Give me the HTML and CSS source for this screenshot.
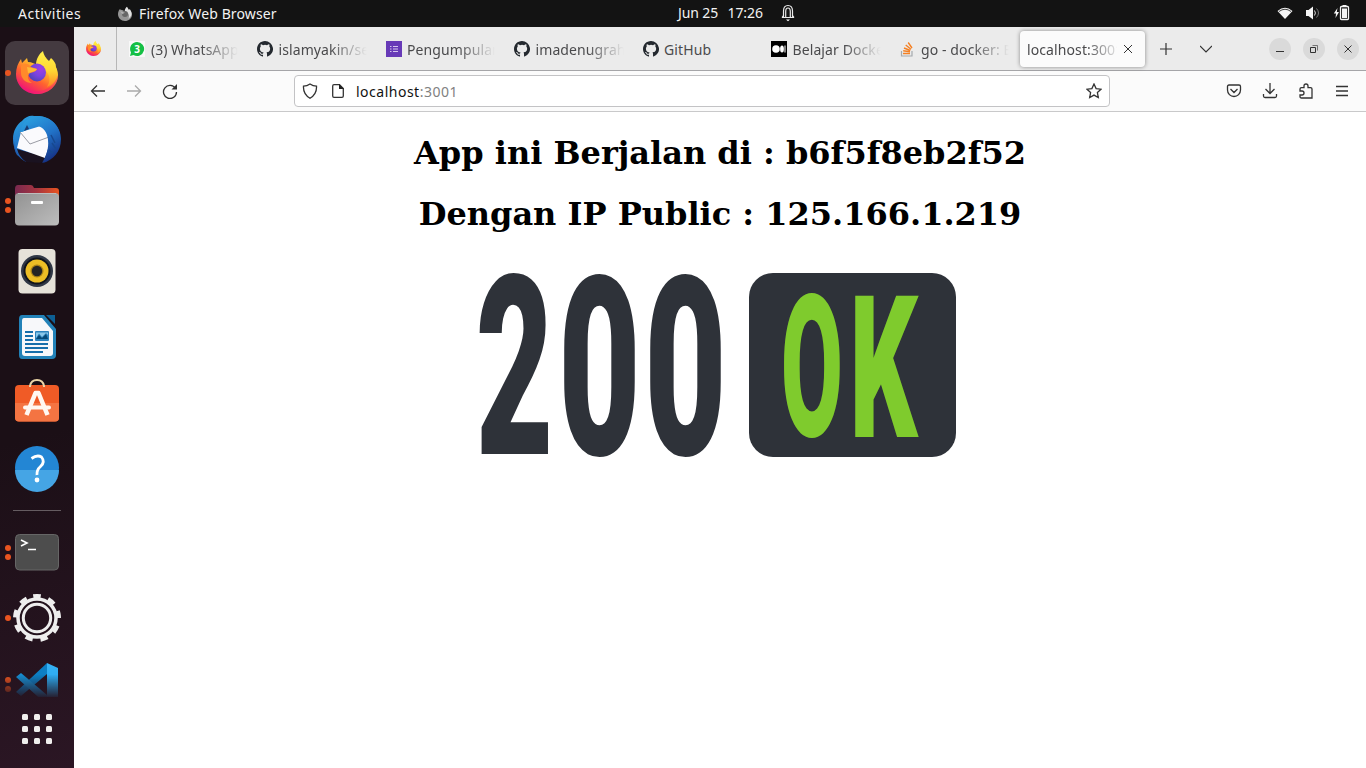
FILE: index.html
```html
<!DOCTYPE html>
<html lang="en">
<head>
<meta charset="utf-8">
<title>localhost:3001</title>
<link rel="stylesheet" href="styles.css">
</head>
<body>
<svg class="defs" width="0" height="0" aria-hidden="true">
  <defs>
    <linearGradient id="ffBody" x1=".85" y1=".1" x2=".25" y2=".95"><stop offset="0" stop-color="#fff044"/><stop offset=".3" stop-color="#ffb52a"/><stop offset=".6" stop-color="#ff622f"/><stop offset="1" stop-color="#f0107a"/></linearGradient>
    <linearGradient id="ffFlame" x1=".5" y1="0" x2=".5" y2="1"><stop offset="0" stop-color="#fff14a"/><stop offset=".55" stop-color="#ffd633"/><stop offset="1" stop-color="#ff8a23"/></linearGradient>
    <radialGradient id="ffGlobe" cx=".7" cy=".3" r=".8"><stop offset="0" stop-color="#a13de4"/><stop offset=".5" stop-color="#7a43df"/><stop offset="1" stop-color="#4b42b5"/></radialGradient>
    <linearGradient id="tb" x1=".2" y1="0" x2=".7" y2="1"><stop offset="0" stop-color="#2ba0e0"/><stop offset=".5" stop-color="#2173c8"/><stop offset="1" stop-color="#152f82"/></linearGradient>
    <linearGradient id="folder"><stop offset="0" stop-color="#79294f"/><stop offset=".5" stop-color="#a63540"/><stop offset="1" stop-color="#e95420"/></linearGradient>
    <linearGradient id="grey" x2="1" y2="1"><stop offset="0" stop-color="#929292"/><stop offset="1" stop-color="#bdbdbd"/></linearGradient>
    <linearGradient id="vs" x2="0" y2="1"><stop offset="0" stop-color="#36b2f5"/><stop offset="1" stop-color="#1e9fe8"/></linearGradient>
    <symbol id="firefox" viewBox="0 0 48 48">
      <path fill="url(#ffBody)" d="M24 45C12 45 3 36 3 25C3 19 5 14 8 10L9 14L14 9L15 13C19 13 22 15 24 16L34 12C42 15 45 20 45 26C45 37 35 45 24 45Z"/>
      <path fill="#f3197b" opacity=".45" d="M3 26C5 37 14 42 24 42C34 42 42 36 45 26C45 37 35 45 24 45C13 45 4 37 3 26Z"/>
      <path fill="url(#ffFlame)" d="M23 16C23 10 26 5 30 2C31 7 33 9 36 12L38 9C41 12 43 14 43 18C46 25 43 34 34 38C40 29 35 20 23 16Z"/>
      <circle cx="24" cy="23.500" r="9" fill="url(#ffGlobe)"/>
      <path fill="#ff8a2b" d="M8 17C12 13 16 15 18 18L24 20C23 23 20 23 17 24C14 26 14 31 19 34C12 34 8 29 8 24Z"/>
      <path fill="#ffb936" d="M14 18L24 20C22 23 18 23 15 24Z"/>
    </symbol>
    <symbol id="firefox-mono" viewBox="0 0 48 48">
      <path fill="#959595" d="M24 45C12 45 3 36 3 25C3 19 5 14 8 10L14 12C19 13 22 15 24 16L34 12C42 15 45 20 45 26C45 37 35 45 24 45Z"/>
      <path fill="#e1e1e1" d="M23 16C23 10 26 5 30 2L36 12L38 9C48 21 44 32 34 38C40 29 35 20 23 16Z"/><circle cx="24" cy="24" r="9" fill="#666"/><path fill="#b4b4b4" d="M9 16L24 20L16 24Z"/>
    </symbol>
    <symbol id="github" viewBox="0 0 16 16"><path fill="#24292f" d="M8 0C3.580 0 0 3.580 0 8c0 3.540 2.290 6.530 5.470 7.590.4.070.55-.17.55-.38v-1.490c-2.010.37-2.530-.49-2.690-.94-.09-.23-.48-.94-.82-1.130-.28-.15-.68-.52-.01-.53.63-.01 1.080.58 1.230.82.72 1.210 1.870.87 2.330.66.070-.52.28-.87.51-1.070-1.780-.2-3.640-.89-3.640-3.950 0-.87.31-1.590.82-2.150-.08-.2-.36-1.020.08-2.120 0 0 .67-.21 2.200.82a7.600 7.600 0 0 1 4 0c1.530-1.040 2.200-.82 2.200-.82.44 1.100.16 1.920.08 2.120.51.56.82 1.270.82 2.150 0 3.070-1.870 3.750-3.650 3.950.29.25.54.73.54 1.480v2.190c0 .21.150.46.55.38A8 8 0 0 0 8 0Z"/></symbol>
  </defs>
</svg>

<header class="topbar">
  <div class="topbar-left"><span class="activities">Activities</span><svg width="16" height="16"><use href="#firefox-mono"/></svg><span class="appname">Firefox Web Browser</span></div>
  <div class="clock"><span class="date">Jun 25</span><span class="time">17:26</span>
    <svg width="16" height="18" viewBox="0 0 16 18" fill="none" stroke="#e8e8e8" stroke-width="1.200"><path d="M2 13.500H14M3.500 13V7Q3.500 1.500 8 1.500T12.500 7V13M5.700 13V7.500Q5.700 4 8 4T10.300 7.500V13"/><path d="M2 13.500L3.500 11.500M14 13.500L12.500 11.500"/><path d="M6 15.500H10L8 17.200Z" fill="#fff" stroke="none"/></svg>
  </div>
  <div class="tray">
    <svg width="16" height="14" viewBox="0 0 16 14"><path d="M.5 5Q8-1.500 15.500 5L8 13Z" fill="#f4f4f4"/><path d="M2 5.500Q8 1 14 5.500" stroke="#131313" fill="none" stroke-width=".8"/></svg>
    <svg width="16" height="16" viewBox="0 0 16 16"><path d="M1 5H3.500L8 1.500V14.500L3.500 11H1Z" fill="#f4f4f4"/><path d="M9.500 5.500Q11.300 8 9.500 10.500" fill="none" stroke="#ddd"/><path d="M11.500 3.500Q15.500 8 11.500 12.500" fill="none" stroke="#777"/></svg>
    <svg width="17" height="16" viewBox="0 0 17 16"><path d="M4.500 3L.8 8.500H3L2.500 13L6 7H3.800Z" fill="#f4f4f4"/><rect x="7.500" y="1.500" width="8" height="13" rx="1" fill="none" stroke="#f4f4f4" stroke-width="1.300"/><path d="M9 3.500H14V13H9ZM9.500 0H13.500V2H9.500Z" fill="#f4f4f4"/></svg>
  </div>
</header>

<div class="desktop">
  <nav class="dock">
    <div class="dock-item active"><div class="dots"><i></i></div><svg class="app"><use href="#firefox"/></svg></div>
    <div class="dock-item"><svg class="app" viewBox="0 0 48 48">
      <path fill="url(#tb)" d="M0 24C0 16 4 9 9 6C12 2 17 0 21 1C37 0 48 11 48 24C48 37 40 45 30 48L33 41L16 38L13 47C5 43 0 34 0 24Z"/>
      <path fill="#1a1220" d="M4 34L32 42Q33 46 27 48L13 47Q6 42 4 34Z"/>
      <path fill="#fafafd" d="M4 33L8 17L31 10L38 25L32 43Z"/>
      <path d="M7 17L17 29L36 22" stroke="#9a9ca5" fill="none"/>
      <path fill="url(#tb)" d="M8 17C8 7 17 1 26 1C37 2 43 8 46 16C49 27 45 37 37 43L29 48C34 40 37 30 34 20C31 11 22 9 16 11C14 13 12 17 8 17Z"/>
      <path d="M1 22Q0 38 13 47L4 40Q0 34 1 22" fill="#225dae"/><path d="M11 16L14 10L16 14Z" fill="#193b72"/>
      <path d="M38 20L42 28M39 28L43 34M36 35L40 38" stroke="#174990" stroke-width="1.500"/>
    </svg></div>
    <div class="dock-item"><div class="dots"><i></i><i></i></div><svg class="app" viewBox="0 0 48 48"><path fill="url(#folder)" d="M2 8Q2 4 5 4H18Q20 4 21 7H43Q46 7 46 10V26H2Z"/><rect x="2" y="12" width="44" height="32.500" rx="4" fill="url(#grey)"/><path d="M5 12.500H43" stroke="#bdbdbd"/><rect x="18" y="20" width="12" height="3" rx="1" fill="#fff"/></svg></div>
    <div class="dock-item"><svg class="app" viewBox="0 0 48 48"><rect x="5.500" y="2" width="37" height="44.500" rx="4" fill="#e6e2d9"/><circle cx="24" cy="24" r="16" fill="#303745"/><circle cx="24" cy="24" r="13.500" fill="#11141b"/><circle cx="24" cy="24" r="11.500" fill="#edbe25"/><circle cx="24" cy="24" r="6.500" fill="#a98218"/><circle cx="24" cy="24" r="5.200" fill="#242424"/></svg></div>
    <div class="dock-item"><svg class="app" viewBox="0 0 48 48"><path d="M9 2H31L43 16V42Q43 46 39 46H9Q6 46 6 42V6Q6 2 9 2Z" fill="#2282b8"/><path d="M33 2H42V11Z" fill="#0d5f94"/><path d="M11 5H29L40 18V40Q40 43 37 43H12Q9 43 9 40V8Q9 5 11 5Z" fill="#f7f8fa"/><path d="M12 19H20M12 23H20M12 27H20M12 31H35M12 35H35M12 39H30" stroke="#176fab" stroke-width="2"/><rect x="22" y="18" width="14" height="10" rx="1" fill="#2c83bd"/><path d="M23 26L26 22L29 25L33 21L35 26Z" fill="#064976"/><path d="M23 19.500H35V22L33 20L29 24L26 20.500L23 25Z" fill="#8ac7e9"/></svg></div>
    <div class="dock-item"><svg class="app" viewBox="0 0 48 48"><rect x="2" y="6" width="44" height="36.500" rx="4" fill="#f05b26"/><path d="M2 24H46V38.500Q46 42.500 42 42.500H6Q2 42.500 2 38.500Z" fill="#f47442"/><path d="M17 8V7Q18 1 24 1T31 7V8" fill="none" stroke="#ecd5a7" stroke-width="2"/><g stroke="#fff8f2" fill="none" stroke-width="4.500"><path d="M13.500 36L22.500 14H25.500L34.500 36" stroke-linejoin="round"/><path d="M12 28.500H36" stroke-width="4" stroke-linecap="round"/></g></svg></div>
    <div class="dock-item"><svg class="app" viewBox="0 0 48 48"><circle cx="24" cy="23" r="22" fill="#2386d4"/><path d="M2 25H46A22 22 0 0 1 2 25" fill="#45a5e5"/><path d="M18.500 13.500Q24 9.500 28.500 12Q32.500 17 27.500 21.500Q23.500 25 24 30" fill="none" stroke="#fff" stroke-width="2.800"/><circle cx="24" cy="35" r="2.400" fill="#fff"/></svg></div>
    <div class="dock-sep"></div>
    <div class="dock-item"><div class="dots"><i></i><i></i></div><svg class="app" viewBox="0 0 48 48"><rect x="2.500" y="6.500" width="43" height="35.500" rx="4" fill="#4d4d4d" stroke="#666"/><path d="M8 12L14 15L8 18M15 21.500H23" fill="none" stroke="#fff" stroke-width="1.600"/></svg></div>
    <div class="dock-item"><div class="dots"><i></i></div><svg class="app" viewBox="0 0 48 48" fill="none" stroke="#eee"><circle cx="24" cy="24" r="22" stroke-width="4" stroke-dasharray="7.500 7.858" transform="rotate(-99.800 24 24)"/><circle cx="24" cy="24" r="19" stroke-width="3.500"/><circle cx="24" cy="24" r="13.700" stroke-width="3"/></svg></div>
    <div class="dock-item clipped"><div class="dots"><i></i><i></i></div><svg class="app" viewBox="0 0 48 48"><path d="M34 3L3 32L8 36L34 14Z" fill="#0d7fc4"/><path d="M3 17L8 13L34 35V45Z" fill="#168dd1"/><path d="M34 3L45 8V40L34 45Z" fill="url(#vs)"/></svg></div>
    <div class="apps"><i></i><i></i><i></i><i></i><i></i><i></i><i></i><i></i><i></i></div>
  </nav>

  <main class="browser">
    <div class="tabbar">
      <div class="pinned"><svg width="17" height="17"><use href="#firefox"/></svg></div>
      <div class="tabs">
        <div class="tab"><svg width="16" height="16" viewBox="0 0 16 16"><path d="M0 16V0H16V16Z" fill="#f8f8f8"/><path d="M8 1A7 7 0 1 1 4.500 14L1 15L2 11.500A7 7 0 0 1 8 1Z" fill="#14bf45"/><text x="8" y="11.800" class="badge-num">3</text></svg><span class="w1">(3) WhatsApp</span></div>
        <div class="tab"><svg width="16" height="16"><use href="#github"/></svg><span class="w2">islamyakin/serv</span></div>
        <div class="tab"><svg width="16" height="16" viewBox="0 0 16 16"><path d="M0 0H16V16H0Z" fill="#673ab7"/><path d="M4 5.500H5.500M7 5.500H12M4 8H5.500M7 8H12M4 10.500H5.500M7 10.500H12" stroke="#d5c5ee" stroke-width="1.100"/></svg><span class="w3">Pengumpulan</span></div>
        <div class="tab"><svg width="16" height="16"><use href="#github"/></svg><span class="w4">imadenugraha</span></div>
        <div class="tab"><svg width="16" height="16"><use href="#github"/></svg><span class="w5">GitHub</span></div>
        <div class="tab"><svg width="16" height="16" viewBox="0 0 16 16"><path d="M0 0H16V16H0Z"/><circle cx="5" cy="8" r="3.800" fill="#fff"/><ellipse cx="11" cy="8" rx="1.900" ry="3.500" fill="#fff"/><path d="M14 4.500V11.500" stroke="#fff"/></svg><span class="w6">Belajar Docker</span></div>
        <div class="tab"><svg width="16" height="16" viewBox="0 0 16 16" fill="none"><path d="M1.500 10V15H12V10" stroke="#a5aaae" stroke-width="1.200"/><path d="M3 12.500H10M3.200 9.800L10 10.700M4 7L10.300 9.500M5.700 4L11 8.200M8.200 1.500L12 7" stroke="#f48024" stroke-width="1.400"/></svg><span class="w7">go - docker: Err</span></div>
        <div class="tab selected"><span class="w8">localhost:3001</span><svg width="10" height="10" viewBox="0 0 10 10" stroke="#333"><path d="M1 1L9 9M9 1L1 9"/></svg></div>
      </div>
      <div class="tab-actions"><svg width="12" height="12" viewBox="0 0 12 12" fill="none" stroke="#333" stroke-width="1.200"><path d="M0 6H12M6 0V12"/></svg><svg width="12" height="8" viewBox="0 0 12 8" fill="none" stroke="#333" stroke-width="1.200"><path d="M0 1L6 7L12 1"/></svg></div>
      <div class="window-actions">
        <button><svg viewBox="0 0 12 12"><path d="M2 8.500H10"/></svg></button><button><svg viewBox="0 0 12 12"><path d="M2.500 4.500H7.500V9.500H2.500Z"/><path d="M4.500 2.500H9.500V7.500" opacity=".6"/></svg></button><button><svg viewBox="0 0 12 12"><path d="M2.500 2.500L9.500 9.500M9.500 2.500L2.500 9.500"/></svg></button>
      </div>
    </div>
    <div class="toolbar">
      <div class="nav">
        <svg width="16" height="16" viewBox="0 0 16 16"><path d="M15 8H1.500M7 2.500L1.500 8L7 13.500"/></svg>
        <svg class="disabled" width="16" height="16" viewBox="0 0 16 16"><path d="M1 8H14.500M9 2.500L14.500 8L9 13.500"/></svg>
        <svg width="16" height="16" viewBox="0 0 16 16"><path d="M13.500 5.500A6.500 6.500 0 1 0 14.500 9"/><path d="M15 1V6.500H9.500Z" fill="#333" stroke="none"/></svg>
      </div>
      <div class="urlbar">
        <svg width="16" height="16" viewBox="0 0 16 16"><path d="M8 1Q11 3 14.500 3.200Q15 11 8 15.300Q1 11 1.500 3.200Q5 3 8 1Z"/></svg>
        <svg width="16" height="16" viewBox="0 0 16 16"><path d="M9.500 1.700H4Q2.700 1.700 2.700 3V13Q2.700 14.300 4 14.300H12Q13.300 14.300 13.300 13V5.500Z"/><path d="M9 1V6H14Z" fill="#222" stroke="none"/></svg>
        <div class="url">localhost<span>:3001</span></div>
        <svg width="16" height="16" viewBox="0 0 16 16"><path d="M8 1L10.100 5.600L15 6.200L11.400 9.600L12.300 14.600L8 12.100L3.700 14.600L4.600 9.600L1 6.200L5.900 5.600Z"/></svg>
      </div>
      <div class="tools">
        <svg width="16" height="16" viewBox="0 0 16 16"><path d="M3 2H13Q14.500 2 14.500 3.500V7A6.500 6.500 0 0 1 1.500 7V3.500Q1.500 2 3 2ZM4.500 6L8 9.500L11.500 6"/></svg>
        <svg width="16" height="16" viewBox="0 0 16 16"><path d="M8 0V10.500M3.500 6L8 10.500L12.500 6M1.500 11V13Q1.500 14.500 3 14.500H13Q14.500 14.500 14.500 13V11"/></svg>
        <svg width="16" height="16" viewBox="0 0 16 16"><path d="M2 8V6Q2 4.700 3.500 4.700H6V3Q6 1 8 1T10 3V4.700H12.500Q14 4.700 14 6V15H3.500Q2 15 2 13.500V12H4Q6 12 6 10T4 8Z"/></svg>
        <svg width="16" height="16" viewBox="0 0 16 16"><path d="M2 3.500H14M2 8H14M2 12.500H14"/></svg>
      </div>
    </div>
    <section class="page">
      <h1>App ini Berjalan di : b6f5f8eb2f52</h1>
      <h1>Dengan IP Public : 125.166.1.219</h1>
      <svg class="status" width="500" height="210" viewBox="0 0 500 210" role="img" aria-label="200 OK">
        <rect x="279" y="13" width="207" height="184" rx="24"/>
        <g class="code"><text transform="translate(5.800 194) scale(.533 1)">2</text><text transform="translate(88.300 194.500) scale(.567 1)">0</text><text transform="translate(174.300 194.500) scale(.567 1)">0</text></g>
        <g class="word"><text transform="translate(311 176) scale(.45 1)">O</text><text transform="translate(379.500 176.500) scale(.535 1)">K</text></g>
      </svg>
    </section>
  </main>
</div>
</body>
</html>
```
FILE: styles.css
```css
* { box-sizing: border-box; }
body { margin: 0; width: 1366px; height: 768px; overflow: hidden; background: #fff; font: 14px "Noto Sans", "Open Sans", sans-serif; }
svg { display: block; flex: none; }
.defs { position: absolute; }
.topbar { height: 27px; background: #131313; color: #f2f2f2; display: grid; grid-template-columns: 678px 1fr auto; align-items: center; line-height: 27px; }
.topbar-left, .clock, .tray { display: flex; align-items: center; }
.activities { margin-left: 18px; width: 99px; letter-spacing: .48px; }
.appname { margin-left: 6px; letter-spacing: .12px; }
.clock { line-height: 25px; padding-bottom: 2px; }
.date { width: 49.5px; letter-spacing: -.1px; }
.time { width: 52.5px; letter-spacing: -.1px; }
.tray { gap: 12px; padding: 0 16px 2px 0; }
.desktop { display: flex; height: 741px; }
.dock { width: 74px; padding: 14px 5px 0; background: linear-gradient(165deg, #1b0f16 55%, #2b1624); display: flex; flex-direction: column; gap: 2px; flex: none; }
.dock-item { position: relative; height: 64px; flex: none; padding: 8px; border-radius: 10px; }
.dock-item.active { background: #443a40; }
.app { width: 48px; height: 48px; }
.dots { position: absolute; left: 0; top: 0; height: 64px; display: flex; flex-direction: column; justify-content: center; gap: 3px; }
.dots i { width: 6px; height: 6px; border-radius: 50%; background: #e95420; }
.dock-sep { height: 15px; margin: 0 8px; flex: none; background: linear-gradient(#655c61, #655c61) 0 7px / 100% 1px no-repeat; }
.dock-item.clipped { height: 45px; overflow: hidden; border-radius: 0; -webkit-mask-image: linear-gradient(#000 50%, transparent 105%); mask-image: linear-gradient(#000 50%, transparent 105%); }
.apps { display: grid; grid-template-columns: repeat(3, 6px); gap: 6px; margin: 15px 17px; }
.apps i { height: 6px; border-radius: 1.5px; background: #f0efed; }
.browser { flex: 1; min-width: 0; }
.tabbar { height: 44px; background: #ebebeb; border-bottom: 1px solid #a5a5a8; display: flex; }
.pinned { width: 43px; border-right: 1px solid #b7b7b7; padding: 13px 11px; }
.tabs { display: flex; padding-left: 1px; width: 1029px; flex: none; }
.tab { width: 128.5px; flex: none; display: flex; align-items: center; gap: 5.5px; padding: 0 8px 0 10.5px; color: #4a4a4c; }
.tab span { width: 88px; flex: none; overflow: hidden; white-space: nowrap; line-height: 22px; padding-top: 2px; letter-spacing: .1px; -webkit-mask-image: linear-gradient(90deg, #000 58%, transparent); mask-image: linear-gradient(90deg, #000 58%, transparent); }
.tab .w1 { padding-left: 1px; letter-spacing: 0; }
.tab .w5 { -webkit-mask-image: none; mask-image: none; }
.badge-num { font: bold 10px "Noto Sans", sans-serif; fill: #fff; text-anchor: middle; }
.tab.selected { width: 125px; margin: 4px 0 3px 2px; padding: 0 8px 0 7.5px; background: #fbfbfb; border-radius: 4px; box-shadow: 0 0 4px rgba(0,0,0,.42); }
.tab.selected span { width: 90px; padding-top: 1px; letter-spacing: .1px; -webkit-mask-image: linear-gradient(90deg, #000 65%, transparent 105%); mask-image: linear-gradient(90deg, #000 65%, transparent 105%); }
.tab-actions { display: flex; gap: 28px; align-items: center; padding-left: 13.5px; }
.window-actions { display: flex; gap: 12px; align-items: center; margin: 0 7px 0 auto; }
.window-actions button { width: 22px; height: 22px; padding: 5px; border: 0; border-radius: 50%; background: #dadada; }
.window-actions svg { width: 12px; height: 12px; fill: none; stroke: #333; }
.toolbar { height: 41px; background: #fbfbfb; border-bottom: 1px solid #c9c9ca; display: flex; align-items: center; }
.toolbar svg { fill: none; stroke: #333; stroke-width: 1.3; }
.nav { display: flex; gap: 20px; width: 220px; padding-left: 16px; }
.nav .disabled { opacity: .4; }
.urlbar { width: 816px; height: 32px; border: 1px solid #c3c3c5; border-radius: 4px; background: #fff; display: flex; align-items: center; gap: 12px; padding: 0 7px; }
.url { flex: 1; margin-left: -2px; color: #111; letter-spacing: .5px; }
.url span { color: #818181; }
.tools { display: flex; gap: 20px; margin-left: 116px; }
.page { padding-top: 22px; text-align: center; }
h1 { margin: 0 0 22px; font: bold 32px/39px "DejaVu Serif", serif; color: #000; }
.status { margin: 26px 0 0 396px; }
.status rect { fill: #2e3239; }
.code { font: 900 251px Roboto, sans-serif; fill: #2e3239; }
.word { font: 900 199px Roboto, sans-serif; fill: #7fcb2d; }
```
